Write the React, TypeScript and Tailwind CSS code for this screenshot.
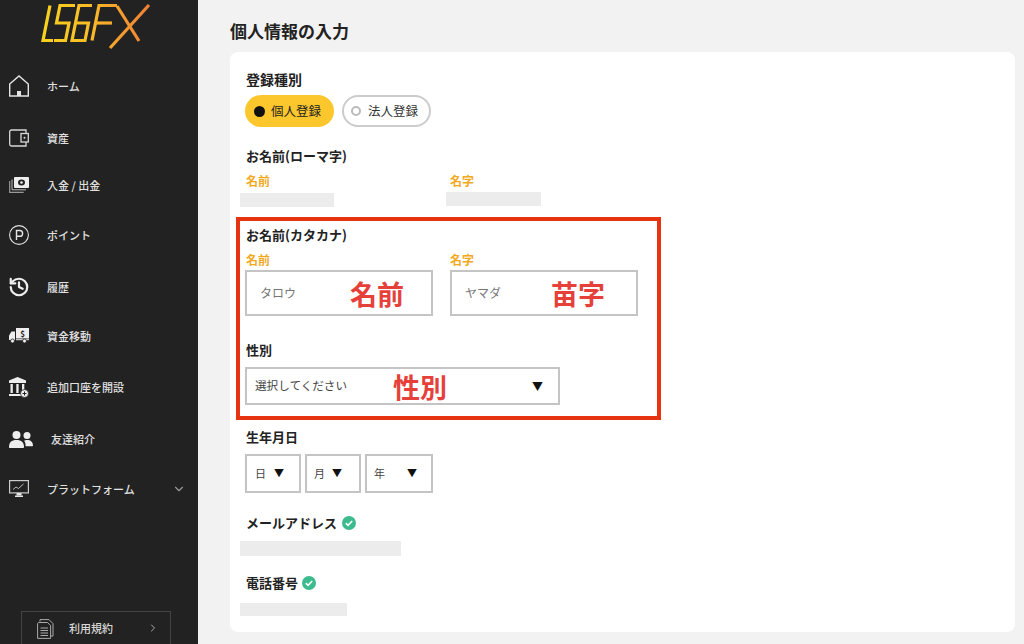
import { ChevronDown, ChevronRight, History } from 'lucide-react'
import type { ReactNode } from 'react'

const font = { fontFamily: '"Noto Sans CJK JP", "Liberation Sans", sans-serif' }

function Logo() {
  return (
    <svg width="120" height="55" viewBox="35 0 120 55" fill="none" className="block ml-[35px]">
      <defs>
        <linearGradient id="logoGrad" gradientUnits="userSpaceOnUse" x1="42" y1="0" x2="150" y2="0">
          <stop offset="0" stopColor="#f8d31c" />
          <stop offset="0.45" stopColor="#f9bb28" />
          <stop offset="1" stopColor="#ef7f35" />
        </linearGradient>
      </defs>
      <g stroke="url(#logoGrad)" strokeWidth="3.200">
        <path d="M50 5.500 L43 40.500 L53 40.500" />
        <path d="M75 5.500 L60 5.500 L56.500 23 L69 23 L65.500 40.500 L54 40.500" />
        <path d="M92 5.500 L79 5.500 L72 40.500 L85 40.500 L88.500 23 L76 23" />
        <path d="M117 5.500 L99 5.500 L92 40.500" />
        <path d="M95.500 23 L112 23" />
        <path d="M149 5 L110 48" />
        <path d="M117 6 L139 41" />
      </g>
    </svg>
  )
}

function HomeIcon() {
  return (
    <svg width="20" height="22" viewBox="0 0 20 22" fill="none" stroke="#e4e4e4" strokeWidth="1.400">
      <path d="M.7 9 10 1l9.300 8v12H.7z" />
      <path d="M8 21v-5h4v5" fill="#e4e4e4" stroke="none" />
    </svg>
  )
}

function WalletIcon() {
  return (
    <svg width="20" height="18" viewBox="0 0 20 18" fill="none" stroke="#d8d8d8" strokeWidth="1.300">
      <path d="M17 4V1H2.500A1.800 1.800 0 0 0 .7 2.800v12.400A1.800 1.800 0 0 0 2.500 17H17v-4" />
      <rect x="12" y="4.500" width="7.300" height="8.500" />
      <circle cx="15.500" cy="8.700" r="1" fill="#d8d8d8" stroke="none" />
    </svg>
  )
}

function MoneyIcon() {
  return (
    <svg width="20" height="16" viewBox="0 0 20 16" fill="none">
      <path d="M.7 4v11.300h14" stroke="#999" strokeWidth="1.200" />
      <path d="M3 2.500v10.300h14" stroke="#bbb" strokeWidth="1" />
      <rect x="5" y="0" width="15" height="11" rx="1" fill="#eee" />
      <ellipse cx="12.500" cy="5.500" rx="3.500" ry="3" fill="#222" />
      <circle cx="12.500" cy="5.500" r="1.300" fill="#eee" />
    </svg>
  )
}

function PointIcon() {
  return (
    <svg width="20" height="20" viewBox="0 0 20 20" fill="none" stroke="#e4e4e4" strokeWidth="1.100">
      <circle cx="10" cy="10" r="9.400" />
      <path d="M7.500 15V5.500h3.200a2.900 2.900 0 0 1 0 5.800H7.500" strokeWidth="1.400" />
    </svg>
  )
}

function TruckIcon() {
  return (
    <svg width="20" height="16" viewBox="0 0 20 16">
      <rect x="7" y="0" width="13" height="10.500" fill="#eee" />
      <text x="13.500" y="8.500" fontSize="8" fontWeight="700" textAnchor="middle" fill="#222" style={font}>$</text>
      <path d="M0 7.500 2.500 3.500H6V12H0z" fill="#eee" />
      <rect x="7" y="11.200" width="13" height="1" fill="#eee" />
      <circle cx="3.500" cy="13" r="2" fill="#eee" stroke="#222" strokeWidth=".8" />
      <circle cx="15.500" cy="13" r="2" fill="#eee" stroke="#222" strokeWidth=".8" />
    </svg>
  )
}

function BankIcon() {
  return (
    <svg width="20" height="21" viewBox="0 0 20 21">
      <path d="M8.500 0 17 3.500V6H0V3.500z" fill="#eee" />
      <rect x="1.500" y="7" width="2.300" height="9" fill="#eee" />
      <rect x="7.300" y="7" width="2.300" height="9" fill="#eee" />
      <rect x="13" y="7" width="2.300" height="6" fill="#eee" />
      <rect x="0" y="17" width="13" height="2" fill="#eee" />
      <circle cx="15.500" cy="16.500" r="4" fill="#eee" stroke="#222" strokeWidth=".8" />
      <path d="M15.500 14.500v4M13.500 16.500h4" stroke="#222" strokeWidth="1" />
    </svg>
  )
}

function UsersIcon() {
  return (
    <svg width="24" height="17" viewBox="0 0 24 17" fill="#eee" className="shrink-0">
      <circle cx="7.500" cy="4" r="4" />
      <path d="M0 16c0-4.500 2.500-7 7.500-7s7.500 2.500 7.500 7c0 .6-.4 1-1 1H1c-.6 0-1-.4-1-1z" />
      <circle cx="18" cy="4.500" r="3.500" />
      <path d="M16.500 9.200c4.500-.6 7.500 1.500 7.500 5.300 0 .5-.4.8-.9.8h-6.600c.2-2.500-.3-4.500-1.500-5.600.5-.2 1-.4 1.500-.5z" />
    </svg>
  )
}

function MonitorIcon() {
  return (
    <svg width="20" height="18" viewBox="0 0 20 18" fill="none">
      <rect x=".6" y=".6" width="18.800" height="12.300" stroke="#ccc" strokeWidth="1.200" />
      <path d="M4 9.500 7 7l2.500 1.500L14.500 4" stroke="#bbb" strokeWidth="1" />
      <rect x="7.500" y="13" width="5" height="2.500" fill="#e4e4e4" />
      <rect x="6" y="15.500" width="8" height="1.500" fill="#e4e4e4" />
    </svg>
  )
}

function DocIcon() {
  return (
    <svg width="17" height="20" viewBox="0 0 17 20" fill="none" stroke="#aaa" strokeWidth="1">
      <path d="M3 2.500V.6h9l4 4v12.400h-2" />
      <path d="M.6 4.500V19.400h13V6.500l-3-3H1.500z" />
      <path d="M3.500 9h7.500M3.500 11.500h7.500M3.500 14h7.500M3.500 16.500h7.500" />
    </svg>
  )
}

const menu: { label: string; icon: ReactNode; h: string; textClass?: string; chevron?: boolean }[] = [
  { label: 'ホーム', icon: <HomeIcon />, h: 'h-[52px]' },
  { label: '資産', icon: <WalletIcon />, h: 'h-[52px]' },
  { label: '入金 / 出金', icon: <MoneyIcon />, h: 'h-[42px]' },
  { label: 'ポイント', icon: <PointIcon />, h: 'h-[58px]' },
  { label: '履歴', icon: <History size={22} strokeWidth={2.4} color="#eee" className="-ml-px" />, h: 'h-[46px]' },
  { label: '資金移動', icon: <TruckIcon />, h: 'h-[52px]' },
  { label: '追加口座を開設', icon: <BankIcon />, h: 'h-[50px]' },
  { label: '友達紹介', icon: <UsersIcon />, h: 'h-[54px]', textClass: 'ml-[4px]' },
  { label: 'プラットフォーム', icon: <MonitorIcon />, h: 'h-[46px]', chevron: true },
]

function Sidebar() {
  return (
    <aside className="w-[198px] h-[644px] shrink-0 bg-[#222222] overflow-hidden">
      <Logo />
      <nav className="mt-[5px]">
        {menu.map((item) => (
          <div key={item.label} className={`flex items-center pl-[9px] ${item.h}`}>
            <div className="w-[38px] flex items-center">{item.icon}</div>
            <span className={`text-[11px] font-medium text-[#e0e0e0] ${item.textClass ?? ''}`}>{item.label}</span>
            {item.chevron && <ChevronDown size={14} color="#999" className="ml-auto mr-[12px]" />}
          </div>
        ))}
      </nav>
      <div className="mt-[99px] ml-[21px] w-[150px] h-[50px] border border-[#444444] flex items-start pt-[7px] pl-[15px]">
        <DocIcon />
        <span className="ml-[15px] mt-[1px] text-[11px] font-medium text-[#d8d8d8]">利用規約</span>
        <ChevronRight size={12} color="#aaa" className="ml-[34px] mt-[3px]" />
      </div>
    </aside>
  )
}

function Label({ children, className = '' }: { children: ReactNode; className?: string }) {
  return <div className={`h-[20px] pl-px flex items-center text-[13px] font-bold text-[#222222] ${className}`}>{children}</div>
}

function SubLabel({ children, className = '' }: { children: ReactNode; className?: string }) {
  return <div className={`h-[20px] pl-px flex items-center text-[12px] font-bold text-[#f2a91e] ${className}`}>{children}</div>
}

function Check({ className = 'ml-[4px]' }: { className?: string }) {
  return (
    <svg width="14" height="14" viewBox="0 0 14 14" className={className}>
      <circle cx="7" cy="7" r="7" fill="#3cbb8e" />
      <path d="M3.800 7.200 6 9.300l4.200-4.300" fill="none" stroke="#fff" strokeWidth="1.600" />
    </svg>
  )
}

function Blank({ className }: { className: string }) {
  return <div className={`bg-[#ececec] ${className}`} />
}

function NameInput({ placeholder, note, noteGap }: { placeholder: string; note: string; noteGap: string }) {
  return (
    <div className="w-[188px] h-[46px] border-2 border-[#c4c4c4] flex items-center pl-[13px]">
      <span className="text-[12px] text-[#777777] w-[37px] whitespace-nowrap">{placeholder}</span>
      <span className={`text-[27px] font-bold text-[#e5413a] leading-none ${noteGap}`}>{note}</span>
    </div>
  )
}

function DateSelect({ label, w, labelPad, gap }: { label: string; w: string; labelPad: string; gap: string }) {
  return (
    <div className={`h-[39px] border-2 border-[#c4c4c4] flex items-center ${labelPad} ${w}`}>
      <span className="text-[11px] text-[#444444]">{label}</span>
      <span className={`text-[10px] text-[#111111] -mt-[3px] ${gap}`}>▼</span>
    </div>
  )
}

export default function App() {
  return (
    <div className="w-[1024px] h-[644px] flex overflow-hidden bg-[#f2f2f2]" style={font}>
      <Sidebar />
      <main className="flex-1 pl-[32px] pr-[9px]">
        <h1 className="h-[52px] pt-[18px] text-[17px] leading-[26px] font-bold text-[#222222]">個人情報の入力</h1>
        <section className="h-[580px] bg-white rounded-lg pl-[15px] pt-[17px]">
          <Label>
            <span className="text-[14px]">登録種別</span>
          </Label>
          <div className="mt-[6px] flex gap-[8px]">
            <div className="w-[89px] h-[32px] rounded-full bg-[#fcc72c] flex items-center pl-[9px] text-[12.500px] text-[#222222]">
              <span className="w-[11px] h-[11px] rounded-full bg-[#111111] mr-[6px]" />
              個人登録
            </div>
            <div className="w-[89px] h-[32px] rounded-full border-2 border-[#cccccc] flex items-center pl-[7px] text-[12.500px] text-[#333333]">
              <span className="w-[10px] h-[10px] rounded-full border-2 border-[#bbbbbb] mr-[7px]" />
              法人登録
            </div>
          </div>
          <Label className="mt-[19px]">お名前(ローマ字)</Label>
          <div className="mt-[5px] flex">
            <SubLabel className="w-[204px]">名前</SubLabel>
            <SubLabel>名字</SubLabel>
          </div>
          <div className="mt-[1px] -ml-[5px] flex items-start">
            <Blank className="w-[94px] h-[14px] mt-[1px]" />
            <Blank className="w-[95px] h-[14px] ml-[112px]" />
          </div>

          <div className="mt-[10px] -ml-[9px] w-[425px] h-[203px] border-[4px] border-[#e63312] pl-[5px] pt-[4px]">
            <Label>お名前(カタカナ)</Label>
            <div className="mt-[5px] flex">
              <SubLabel className="w-[204px]">名前</SubLabel>
              <SubLabel>名字</SubLabel>
            </div>
            <div className="flex gap-[17px]">
              <NameInput placeholder="タロウ" note="名前" noteGap="ml-[53px]" />
              <NameInput placeholder="ヤマダ" note="苗字" noteGap="ml-[49px]" />
            </div>
            <Label className="mt-[24px]">性別</Label>
            <div className="mt-[7px] w-[315px] h-[38px] border-2 border-[#c4c4c4] flex items-center pl-[8px]">
              <span className="w-[93px] text-[11.600px] text-[#444444] whitespace-nowrap">選択してください</span>
              <span className="ml-[45px] text-[27px] font-bold text-[#e5413a] leading-none">性別</span>
              <span className="ml-[85px] text-[11px] text-[#111111]">▼</span>
            </div>
          </div>

          <Label className="mt-[7px]">生年月日</Label>
          <div className="mt-[7px] flex gap-[4px]">
            <DateSelect label="日" w="w-[56px]" labelPad="pl-[8px]" gap="ml-[8px]" />
            <DateSelect label="月" w="w-[56px]" labelPad="pl-[7px]" gap="ml-[7px]" />
            <DateSelect label="年" w="w-[68px]" labelPad="pl-[7px]" gap="ml-[22px]" />
          </div>
          <Label className="mt-[20px]">
            メールアドレス
            <Check className="ml-[5px]" />
          </Label>
          <Blank className="mt-[8px] -ml-[5px] w-[161px] h-[15px]" />
          <Label className="mt-[17px]">
            電話番号
            <Check />
          </Label>
          <Blank className="mt-[10px] -ml-[5px] w-[107px] h-[13px]" />
        </section>
      </main>
    </div>
  )
}
